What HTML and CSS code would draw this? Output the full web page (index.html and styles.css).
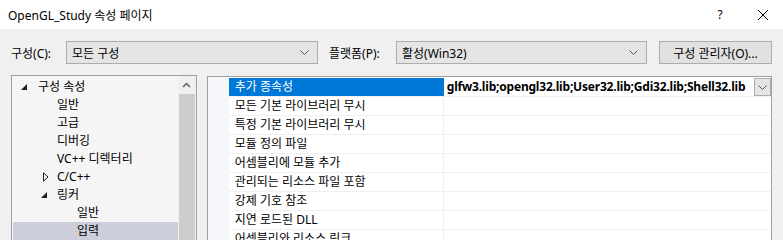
FILE: index.html
```html
<!DOCTYPE html>
<html lang="ko">
<head>
  <meta charset="UTF-8" />
  <title>OpenGL_Study 속성 페이지</title>
  <link rel="stylesheet" href="styles.css">
</head>
<body>
  <div class="titlebar">
    <span class="title">OpenGL_Study 속성 페이지</span>
    <span class="help">?</span>
    <span class="close">
      <svg width="12" height="12" viewBox="0 0 12 12"><path d="M1 1 L11 11 M11 1 L1 11" stroke="#000" stroke-width="1" fill="none"/></svg>
    </span>
  </div>

  <div class="dialog">
    <!-- config row -->
    <div class="toolbar">
      <label class="lbl lbl-config">구성(C):</label>
      <div class="combo combo-config">
        <span>모든 구성</span>
        <svg class="chev" width="9" height="5" viewBox="0 0 9 5"><path d="M0.5 0.5 L4.5 4.5 L8.5 0.5" stroke="#555" fill="none"/></svg>
      </div>
      <label class="lbl lbl-platform">플랫폼(P):</label>
      <div class="combo combo-platform">
        <span>활성(Win32)</span>
        <svg class="chev" width="9" height="5" viewBox="0 0 9 5"><path d="M0.5 0.5 L4.5 4.5 L8.5 0.5" stroke="#555" fill="none"/></svg>
      </div>
      <button class="btn">구성 관리자(O)...</button>
    </div>

    <div class="main">
      <!-- tree -->
      <div class="tree">
        <ul class="nodes">
          <li class="lvl0"><span class="exp open"></span>구성 속성</li>
          <li class="lvl1">일반</li>
          <li class="lvl1">고급</li>
          <li class="lvl1">디버깅</li>
          <li class="lvl1">VC++ 디렉터리</li>
          <li class="lvl1 has">
            <svg class="exp-closed" width="6" height="10" viewBox="0 0 6 10"><path d="M0.5 0.8 L5 5 L0.5 9.2 Z" stroke="#1e1e1e" stroke-width="1" fill="none"/></svg>C/C++
          </li>
          <li class="lvl1 has"><span class="exp open"></span>링커</li>
          <li class="lvl2">일반</li>
          <li class="lvl2 selected">입력</li>
        </ul>
        <div class="scrollbar">
          <div class="arrow">
            <svg width="9" height="6" viewBox="0 0 9 6"><path d="M1 5 L4.5 1.5 L8 5" stroke="#606060" stroke-width="1.5" fill="none"/></svg>
          </div>
          <div class="thumb"></div>
        </div>
      </div>

      <!-- property grid -->
      <div class="grid">
        <div class="gutter"></div>
        <div class="rows">
          <div class="row selected">
            <div class="name">추가 종속성</div>
            <div class="value"><span class="bold">glfw3.lib;opengl32.lib;User32.lib;Gdi32.lib;Shell32.lib</span>
              <span class="dd"><svg width="9" height="5" viewBox="0 0 9 5"><path d="M0.5 0.5 L4.5 4.5 L8.5 0.5" stroke="#555" fill="none"/></svg></span>
            </div>
          </div>
          <div class="row"><div class="name">모든 기본 라이브러리 무시</div><div class="value"></div></div>
          <div class="row"><div class="name">특정 기본 라이브러리 무시</div><div class="value"></div></div>
          <div class="row"><div class="name">모듈 정의 파일</div><div class="value"></div></div>
          <div class="row"><div class="name">어셈블리에 모듈 추가</div><div class="value"></div></div>
          <div class="row"><div class="name">관리되는 리소스 파일 포함</div><div class="value"></div></div>
          <div class="row"><div class="name">강제 기호 참조</div><div class="value"></div></div>
          <div class="row"><div class="name">지연 로드된 DLL</div><div class="value"></div></div>
          <div class="row"><div class="name">어셈블리와 리소스 링크</div><div class="value"></div></div>
        </div>
      </div>
    </div>
  </div>
</body>
</html>
```

FILE: styles.css
```css
body { margin: 0; padding: 0; width: 783px; height: 240px; overflow: hidden; background: #f0f0f0; font-family: "Segoe UI", "Noto Sans", "Noto Sans CJK KR", sans-serif; font-size: 12px; color: #000; }

.titlebar { height: 29px; background: #fff; display: flex; align-items: center; }
.title { padding-left: 8px; flex: 1; font-size: 12px; }
.help { width: 20px; text-align: center; margin-right: 27px; font-size: 12px; }
.close { width: 12px; margin-right: 14px; display: flex; }

.dialog { padding: 12px 11px 0 11px; }

.toolbar { display: flex; align-items: center; height: 23px; }
.lbl { white-space: nowrap; }
.lbl-config { width: 55px; }
.lbl-platform { width: 67px; }
.combo { height: 21px; border: 1px solid #adadad; background: #e5e5e5; display: flex; align-items: center; padding: 0 8px 0 5px; box-sizing: content-box; }
.combo span { flex: 1; }
.combo-config { width: 237px; margin-right: 11px; }
.combo-platform { width: 236px; margin-right: 12px; }
.chev { display: block; }
.btn { width: 113px; height: 23px; border: 1px solid #adadad; background: #e1e1e1; font: inherit; padding: 0; margin: 0; }

.main { display: flex; margin-top: 11px; align-items: flex-start; }

.tree { width: 184px; height: 170px; border: 1px solid #a0a0a0; background: #f5f5f5; display: flex; margin-right: 10px; }
.nodes { list-style: none; margin: 0; padding: 2px 0 0 1px; flex: 1; }
.nodes li { height: 18px; line-height: 18px; white-space: nowrap; position: relative; }
.lvl0 { padding-left: 25px; }
.lvl1 { padding-left: 44px; }
.lvl2 { padding-left: 64px; }
.nodes li.selected { background: #cccedb; }
.exp { display: inline-block; width: 0; height: 0; position: absolute; top: 6px; }
.lvl0 .exp { left: 8px; }
.lvl1 .exp { left: 28px; }
.exp.open { border-left: 6px solid transparent; border-bottom: 6px solid #1e1e1e; }
.exp-closed { position: absolute; left: 30px; top: 4px; display: block; }

.scrollbar { width: 18px; background: #f0f0f0; display: flex; flex-direction: column; align-items: center; }
.arrow { height: 17px; display: flex; align-items: center; justify-content: center; }
.thumb { width: 16px; flex: 1; background: #cdcdcd; margin-top: 1px; }

.grid { width: 564px; height: 170px; border: 1px solid #a0a0a0; background: #fff; display: flex; margin-top: 1px; }
.gutter { width: 21px; background: #f5f7fb; }
.rows { flex: 1; padding-top: 1px; }
.row { display: flex; height: 18px; border-bottom: 1px solid #f0f0f0; }
.name { width: 208px; padding-left: 6px; line-height: 18px; border-right: 1px solid #f0f0f0; white-space: nowrap; }
.value { flex: 1; padding-left: 3px; line-height: 18px; display: flex; white-space: nowrap; }
.bold { font-weight: bold; letter-spacing: -0.2px; }
.row.selected .name { background: #0078d7; color: #fff; border-right-color: #0078d7; }
.dd { margin-left: auto; width: 15px; height: 16px; border: 1px solid #adadad; background: #e5e5e5; display: flex; align-items: center; justify-content: center; }
```
